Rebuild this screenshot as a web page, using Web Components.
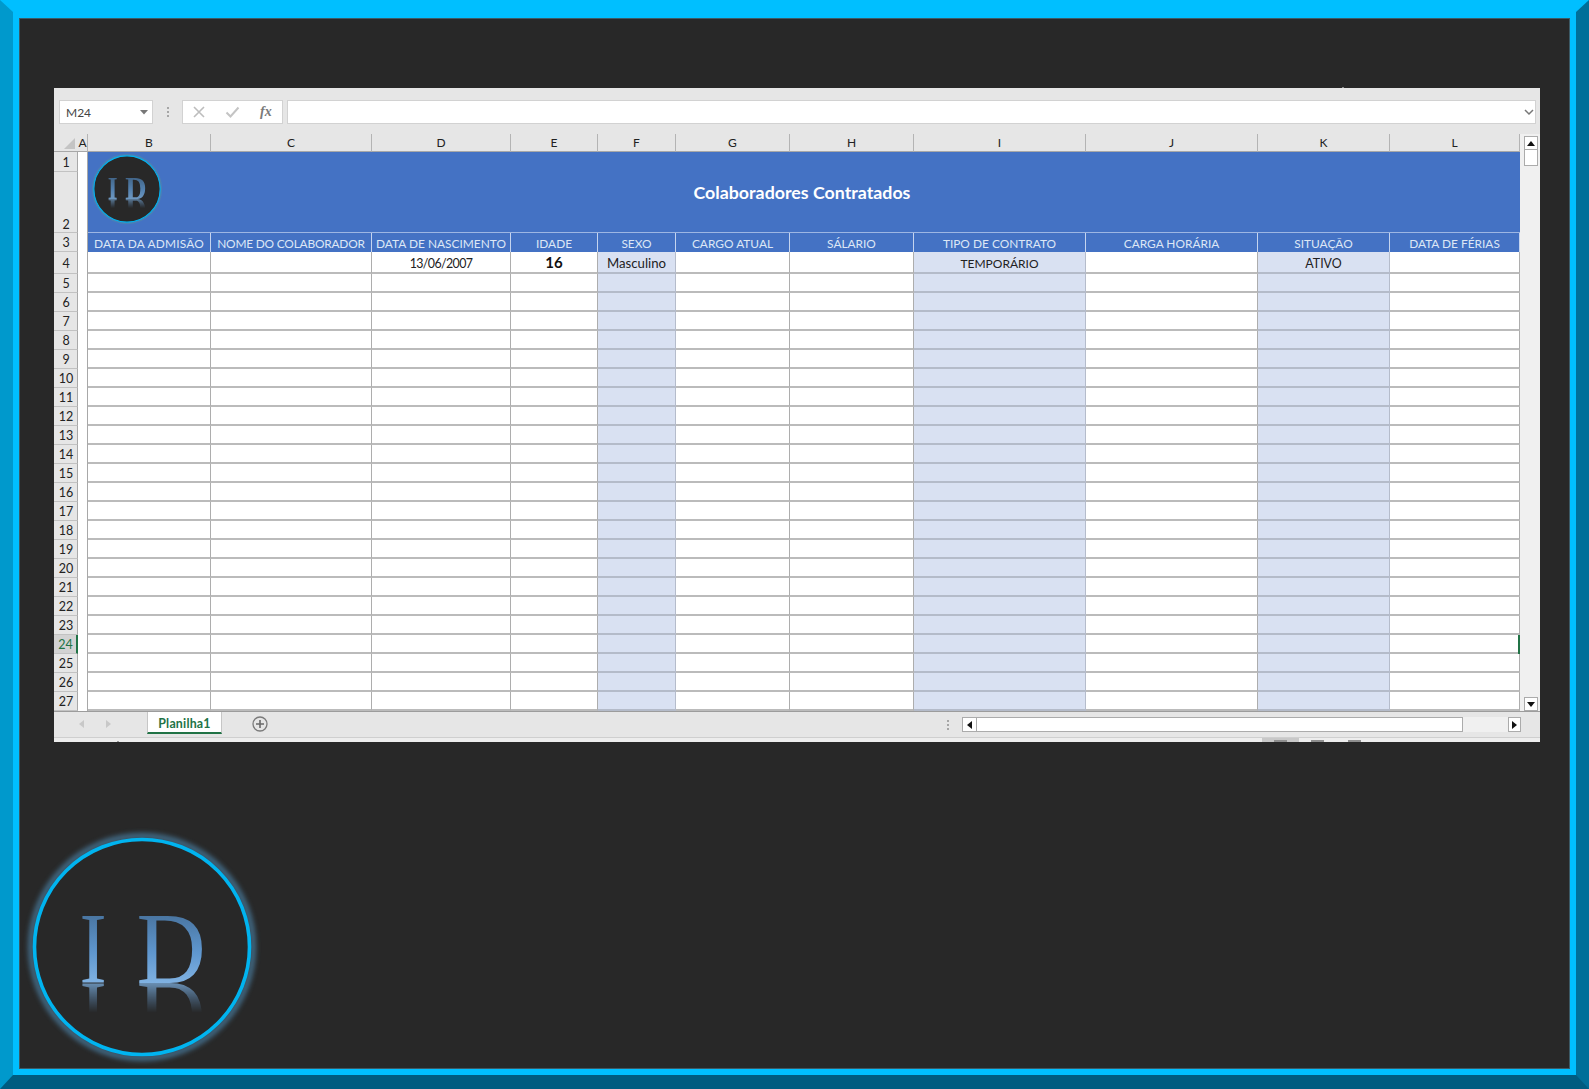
<!DOCTYPE html>
<html lang="pt-BR">
<head>
<meta charset="utf-8">
<title>Colaboradores Contratados</title>
<style>
    html, body { margin: 0; padding: 0; background: #282828; }
</style>
</head>
<body>
<id-frame>
    <excel-sheet></excel-sheet>
    <id-logo size="240"></id-logo>
</id-frame>
<script>
let logoCount = 0;

class IdFrame extends HTMLElement {
    constructor() {
        super();
        this.attachShadow({ mode: 'open' });
    }

    connectedCallback() {
        this.shadowRoot.innerHTML = `
        <style>
            :host {
                display: block;
                width: 1589px;
                height: 1089px;
                box-sizing: border-box;
                border-style: solid;
                border-width: 12px 13px 14px 13px;
                border-color: #00bfff #006f99 #005c80 #0099cc;
            }
            .inner {
                height: 100%;
                box-sizing: border-box;
                border: 6px solid #00bfff;
                background: #282828;
                box-shadow: inset 0 0 0 1px #3c5a66;
                padding-top: 70px;
                display: flex;
                flex-direction: column;
            }
            ::slotted(excel-sheet) { margin: 0 30px 0 35px; }
            ::slotted(id-logo) { margin: 85px 0 0 3px; }
        </style>
        <div class="inner"><slot></slot></div>
        `;
    }
}
customElements.define('id-frame', IdFrame);

class IdLogo extends HTMLElement {
    constructor() {
        super();
        this.attachShadow({ mode: 'open' });
    }

    connectedCallback() {
        const size = Number(this.getAttribute('size') || 240);
        const n = ++logoCount;
        this.shadowRoot.innerHTML = `
        <style>
            :host { display: block; position: relative; width: ${size}px; height: ${size}px; line-height: 0; }
            svg { display: block; overflow: visible; }
            .letters {
                position: absolute;
                left: 0;
                top: -1px;
                opacity: ${size < 100 ? 0.82 : 1};
                -webkit-box-reflect: below 0 linear-gradient(to bottom, transparent 81%, rgba(255,255,255,0.75));
            }
            text { font-family: "Liberation Serif", serif; font-size: 102px; }
        </style>
        <svg width="${size}" height="${size}" viewBox="0 0 240 240">
            <defs>
                <filter id="glow${n}" x="-20%" y="-20%" width="140%" height="140%">
                    <feGaussianBlur stdDeviation="2.500"/>
                </filter>
            </defs>
            <circle cx="120" cy="120" r="111" fill="none" stroke="#4d87ae" stroke-width="6" opacity="0.7" filter="url(#glow${n})"/>
            <circle cx="120" cy="120" r="107.500" fill="#282828" stroke="#00b4f0" stroke-width="3.600"/>
        </svg>
        <svg class="letters" width="${size}" height="${size * 157 / 240}" viewBox="0 0 240 157">
            <defs>
                <linearGradient id="face${n}" gradientUnits="userSpaceOnUse" x1="0" y1="-67" x2="0" y2="0">
                    <stop offset="0" stop-color="#4a76a2"/>
                    <stop offset="0.55" stop-color="#5f97cf"/>
                    <stop offset="1" stop-color="#80b2e2"/>
                </linearGradient>
            </defs>
            <text transform="translate(57.500 157) scale(0.8 1)" style="fill:url(#face${n})">I</text>
            <text transform="translate(114.500 157) scale(0.94 1)" style="fill:url(#face${n})">D</text>
        </svg>
        `;
    }
}
customElements.define('id-logo', IdLogo);

class FormulaBar extends HTMLElement {
    constructor() {
        super();
        this.attachShadow({ mode: 'open' });
    }

    connectedCallback() {
        this.shadowRoot.innerHTML = `
        <style>
            :host {
                display: flex;
                height: 46px;
                box-sizing: border-box;
                padding: 12px 4px 10px 5px;
                align-items: stretch;
                background: #e6e6e6;
                font: 12px Lato, "Liberation Sans", sans-serif;
            }
            .box { background: #fff; border: 1px solid #d2d2d2; box-sizing: border-box; display: flex; align-items: center; }
            .name { width: 94px; padding: 0 4px 0 6px; justify-content: space-between; color: #444; }
            .dots { width: 29px; display: flex; flex-direction: column; align-items: center; justify-content: center; gap: 2px; }
            .dots i { width: 2px; height: 2px; background: #a6a6a6; display: block; }
            .fx { width: 101px; padding-left: 10px; gap: 20px; }
            .fx em { font: italic 700 14px "Liberation Serif", serif; color: #7a7a7a; }
            .input { flex: 1; margin-left: 4px; justify-content: flex-end; padding-right: 1px; }
        </style>
        <div class="box name">
            <span>M24</span>
            <svg width="8" height="5" viewBox="0 0 8 5"><path d="M0 0h8L4 4.500z" fill="#777"/></svg>
        </div>
        <div class="dots"><i></i><i></i><i></i></div>
        <div class="box fx">
            <svg width="12" height="12" viewBox="0 0 12 12"><path d="M1 1l10 10M11 1L1 11" stroke="#bdbdbd" stroke-width="1.600" fill="none"/></svg>
            <svg width="15" height="12" viewBox="0 0 15 12"><path d="M1.500 6.500l4 4L13.500 1.500" stroke="#c4c4c4" stroke-width="2" fill="none"/></svg>
            <em>fx</em>
        </div>
        <div class="box input">
            <svg width="10" height="7" viewBox="0 0 10 7"><path d="M1 1l4 4 4-4" stroke="#777" stroke-width="1.500" fill="none"/></svg>
        </div>
        `;
    }
}
customElements.define('formula-bar', FormulaBar);

class SheetGrid extends HTMLElement {
    constructor() {
        super();
        this.attachShadow({ mode: 'open' });
    }

    connectedCallback() {
        const letters = ['A', 'B', 'C', 'D', 'E', 'F', 'G', 'H', 'I', 'J', 'K', 'L'];
        const heads = ['DATA DA ADMISÃO', 'NOME DO COLABORADOR', 'DATA DE NASCIMENTO', 'IDADE', 'SEXO', 'CARGO ATUAL', 'SÁLARIO', 'TIPO DE CONTRATO', 'CARGA HORÁRIA', 'SITUAÇÃO', 'DATA DE FÉRIAS'];
        // Lato runs a little wider or narrower than the sheet's font on these two
        const headSpacing = { 'DATA DA ADMISÃO': '0.2px', 'NOME DO COLABORADOR': '-0.2px' };
        const first = { D: '13/06/2007', E: '16', F: 'Masculino', I: 'TEMPORÁRIO', K: 'ATIVO' };
        const firstClass = { D: 'date', E: 'age', F: 'sex', I: 'kind' };
        const shaded = ['F', 'I', 'K'];

        let html = '<div class="corner"><svg width="11" height="11" viewBox="0 0 11 11"><path d="M11 0v11H0z" fill="#c4c4c4"/></svg></div>';
        html += letters.map(l => `<div class="col">${l}</div>`).join('');

        html += '<div class="rh">1</div><div class="a"></div>';
        html += '<div class="title"><id-logo size="74"></id-logo><span>Colaboradores Contratados</span></div>';
        html += '<div class="rh tall">2</div><div class="a"></div>';

        html += '<div class="rh">3</div><div class="a"></div>';
        html += heads.map(h => `<div class="head" style="letter-spacing:${headSpacing[h] || 'normal'}">${h}</div>`).join('');

        for (let r = 4; r <= 27; r++) {
            html += `<div class="rh${r === 24 ? ' sel' : ''}">${r}</div><div class="a"></div>`;
            letters.slice(1).forEach(l => {
                const cls = ['cell'];
                if (shaded.includes(l)) cls.push('shade');
                if (r === 24 && l === 'L') cls.push('mark');
                if (r === 4 && firstClass[l]) cls.push(firstClass[l]);
                html += `<div class="${cls.join(' ')}">${r === 4 && first[l] ? first[l] : ''}</div>`;
            });
        }

        this.shadowRoot.innerHTML = `
        <style>
            :host {
                display: grid;
                flex: 1;
                grid-template-columns: 24px 10px 123px 161px 139px 87px 78px 114px 124px 172px 172px 132px 130px;
                grid-template-rows: 18px 20px 61px 19px 22px repeat(23, 19px);
                font: 12px Lato, "Liberation Sans", sans-serif;
                color: #222;
                background: #fff;
            }
            .corner { background: #e6e6e6; display: flex; align-items: flex-end; justify-content: flex-end; padding: 0 3px 2px 0; border-bottom: 1px solid #a8a8a8; box-sizing: border-box; }
            .col { background: #e6e6e6; border-right: 1px solid #b4b4b4; border-bottom: 1px solid #a8a8a8; box-sizing: border-box; display: flex; align-items: center; justify-content: center; }
            .rh { background: #e6e6e6; border-right: 1px solid #a8a8a8; border-bottom: 1px solid #c2c2c2; box-sizing: border-box; display: flex; align-items: center; justify-content: center; padding: 1px 0 0 1px; font-size: 12.500px; }
            .rh.tall { align-items: flex-end; }
            .rh.sel { background: #d2d2d2; color: #217346; border-right: 2px solid #217346; }
            .a { background: #fff; border-right: 1px solid #a8a8a8; box-sizing: border-box; }
            .title {
                grid-column: 3 / -1;
                grid-row: 2 / span 2;
                position: relative;
                background: #4472c4;
                color: #fff;
                display: flex;
                align-items: center;
                justify-content: center;
                font-weight: 700;
                font-size: 17.800px;
                border-bottom: 1px solid #9db6e3;
                box-sizing: border-box;
            }
            .title id-logo { position: absolute; left: 2px; top: 0; }
            .title span { margin-right: 4px; }
            .head {
                background: #4472c4;
                color: #dde7f6;
                border-right: 1px solid #c5d4ef;
                box-sizing: border-box;
                display: flex;
                align-items: center;
                justify-content: center;
                white-space: nowrap;
                font-size: 11.900px;
                padding-top: 1px;
            }
            .cell {
                background: #fff;
                border-right: 1px solid #adadad;
                border-bottom: 2px solid #bbb;
                box-sizing: border-box;
                display: flex;
                align-items: center;
                justify-content: center;
                white-space: nowrap;
                font-size: 12.400px;
                padding-top: 3px;
                position: relative;
            }
            .cell.shade { background: #d9e1f2; border-right-color: #b5bccb; border-bottom-color: #b4bbc9; }
            .cell.date { letter-spacing: -0.600px; }
            .cell.age { font-weight: 700; font-size: 15px; color: #111; padding-top: 0; }
            .cell.sex { font-size: 13.200px; padding-top: 1px; }
            .cell.kind { font-size: 12px; }
            .cell.mark::after { content: ""; position: absolute; right: -1px; top: 0; bottom: -2px; width: 2px; background: #217346; }
        </style>
        ${html}
        `;
    }
}
customElements.define('sheet-grid', SheetGrid);

class VScroll extends HTMLElement {
    constructor() {
        super();
        this.attachShadow({ mode: 'open' });
    }

    connectedCallback() {
        this.shadowRoot.innerHTML = `
        <style>
            :host {
                display: flex;
                flex-direction: column;
                width: 20px;
                box-sizing: border-box;
                background: #f0f0f0;
                padding: 2px 2px 0 4px;
            }
            .btn { height: 14px; background: #fff; border: 1px solid #ababab; box-sizing: border-box; display: flex; align-items: center; justify-content: center; }
            .thumb { height: 16px; background: #fff; border: 1px solid #ababab; border-top: 0; box-sizing: border-box; }
            .gap { flex: 1; }
        </style>
        <div class="btn"><svg width="8" height="5" viewBox="0 0 8 5"><path d="M4 0l4 5H0z" fill="#111"/></svg></div>
        <div class="thumb"></div>
        <div class="gap"></div>
        <div class="btn"><svg width="8" height="5" viewBox="0 0 8 5"><path d="M0 0h8L4 5z" fill="#111"/></svg></div>
        `;
    }
}
customElements.define('v-scroll', VScroll);

class SheetTabs extends HTMLElement {
    constructor() {
        super();
        this.attachShadow({ mode: 'open' });
    }

    connectedCallback() {
        this.shadowRoot.innerHTML = `
        <style>
            :host {
                display: flex;
                height: 26px;
                box-sizing: border-box;
                border-top: 1px solid #9c9c9c;
                background: #e6e6e6;
                font: 700 12.400px Lato, "Liberation Sans", sans-serif;
            }
            .nav { width: 93px; display: flex; align-items: center; box-sizing: border-box; padding: 0 0 2px 25px; gap: 22px; }
            .tab {
                width: 75px;
                height: 22px;
                box-sizing: border-box;
                background: #fff;
                color: #217346;
                border: 1px solid #c6c6c6;
                border-top: 0;
                border-bottom: 2px solid #217346;
                padding-top: 2px;
                display: flex;
                align-items: center;
                justify-content: center;
                letter-spacing: 0.200px;
            }
            .add { margin: 0 0 1px 30px; align-self: center; display: flex; }
            .spring { flex: 1; }
            .dots { width: 29px; display: flex; flex-direction: column; align-items: center; justify-content: center; gap: 2px; }
            .dots i { width: 2px; height: 2px; background: #a6a6a6; display: block; }
            .hs { width: 559px; height: 15px; margin: 5px 19px 0 0; display: flex; box-sizing: border-box; background: #f0f0f0; }
            .arrow { width: 15px; background: #fff; border: 1px solid #ababab; box-sizing: border-box; display: flex; align-items: center; justify-content: center; }
            .arrow.end { width: 13px; }
            .thumb { width: 486px; background: #fff; border: 1px solid #ababab; border-left: 0; box-sizing: border-box; }
            .rest { flex: 1; }
        </style>
        <div class="nav">
            <svg width="5" height="8" viewBox="0 0 5 8"><path d="M5 0v8L0 4z" fill="#c8c8c8"/></svg>
            <svg width="5" height="8" viewBox="0 0 5 8"><path d="M0 0v8l5-4z" fill="#c8c8c8"/></svg>
        </div>
        <div class="tab">Planilha1</div>
        <div class="add">
            <svg width="16" height="16" viewBox="0 0 16 16"><circle cx="8" cy="8" r="7" fill="none" stroke="#7a7a7a" stroke-width="1.300"/><path d="M8 4v8M4 8h8" stroke="#6a6a6a" stroke-width="1.600"/></svg>
        </div>
        <div class="spring"></div>
        <div class="dots"><i></i><i></i><i></i></div>
        <div class="hs">
            <div class="arrow"><svg width="5" height="8" viewBox="0 0 5 8"><path d="M5 0v8L0 4z" fill="#111"/></svg></div>
            <div class="thumb"></div>
            <div class="rest"></div>
            <div class="arrow end"><svg width="5" height="8" viewBox="0 0 5 8"><path d="M0 0v8l5-4z" fill="#111"/></svg></div>
        </div>
        `;
    }
}
customElements.define('sheet-tabs', SheetTabs);

class StatusStrip extends HTMLElement {
    constructor() {
        super();
        this.attachShadow({ mode: 'open' });
    }

    connectedCallback() {
        this.shadowRoot.innerHTML = `
        <style>
            :host {
                display: flex;
                height: 5px;
                box-sizing: border-box;
                border-top: 1px solid #cfcfcf;
                background: #ededed;
                padding-left: 1208px;
                position: relative;
            }
            :host::before { content: ""; position: absolute; left: 63px; bottom: 0; width: 2px; height: 1px; background: #9a9a9a; }
            .on { width: 37px; background: #c8c8c8; display: flex; justify-content: center; align-items: flex-end; }
            i { display: block; width: 13px; height: 2px; background: #8f8f8f; align-self: flex-end; }
            .s { margin-left: 12px; }
            .t { margin-left: 24px; }
        </style>
        <div class="on"><i></i></div>
        <i class="s"></i>
        <i class="t"></i>
        `;
    }
}
customElements.define('status-strip', StatusStrip);

class ExcelSheet extends HTMLElement {
    constructor() {
        super();
        this.attachShadow({ mode: 'open' });
    }

    connectedCallback() {
        this.shadowRoot.innerHTML = `
        <style>
            :host {
                display: flex;
                flex-direction: column;
                height: 654px;
                background: #e6e6e6;
                position: relative;
            }
            :host::before { content: ""; position: absolute; left: 1288px; top: -1px; width: 2px; height: 1px; background: #8a8a8a; }
            .body { display: flex; height: 577px; }
        </style>
        <formula-bar></formula-bar>
        <div class="body">
            <sheet-grid></sheet-grid>
            <v-scroll></v-scroll>
        </div>
        <sheet-tabs></sheet-tabs>
        <status-strip></status-strip>
        `;
    }
}
customElements.define('excel-sheet', ExcelSheet);
</script>
</body>
</html>
